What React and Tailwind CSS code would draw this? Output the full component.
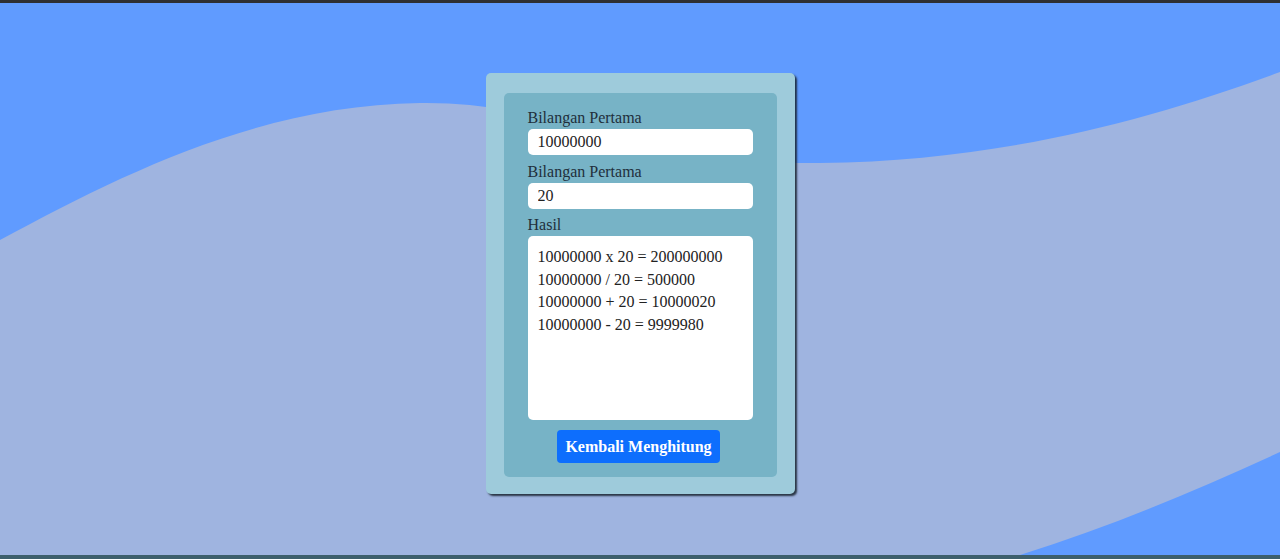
import React from "react";

const serif = { fontFamily: '"Liberation Serif", "Times New Roman", serif' };

function Wave() {
  return (
    <svg
      className="absolute inset-0 w-full h-full"
      viewBox="0 0 1280 552"
      preserveAspectRatio="none"
    >
      <rect width="1280" height="552" fill="#609bff" />
      <path
        d="M0,237 C120,172 260,102 420,100 C560,98 640,162 820,160 C1000,158 1150,117 1280,69 L1280,552 L0,552 Z"
        fill="#9fb4e0"
      />
      <path d="M1020,552 C1110,524 1200,486 1280,449 L1280,552 Z" fill="#609bff" />
    </svg>
  );
}

export default function App() {
  const results = [
    "10000000 x 20 = 200000000",
    "10000000 / 20 = 500000",
    "10000000 + 20 = 10000020",
    "10000000 - 20 = 9999980",
  ];

  return (
    <div className="w-[1280px] h-[559px] flex flex-col overflow-hidden" style={serif}>
      <div className="h-[3px] bg-[#2e2f33]" />
      <main className="relative flex-1 flex justify-center pt-[70px]">
        <Wave />
        <div className="relative w-[309px] h-[421px] bg-[#9ecbdb] rounded-[5px] pt-[20px] pb-[17px] px-[18px] shadow-[2px_2px_2px_rgba(20,30,40,0.85)]">
          <div className="h-full bg-[#77b3c6] rounded-[5px] px-[24px] pt-[13px] flex flex-col">
            <label className="text-[16px] leading-[23px] text-[#1f2f3b]">Bilangan Pertama</label>
            <input
              readOnly
              value="10000000"
              className="h-[26px] bg-white rounded-[5px] px-[10px] text-[16px] text-[#222] outline-none"
              style={serif}
            />
            <label className="mt-[5px] text-[16px] leading-[23px] text-[#1f2f3b]">Bilangan Pertama</label>
            <input
              readOnly
              value="20"
              className="h-[26px] bg-white rounded-[5px] px-[10px] text-[16px] text-[#222] outline-none"
              style={serif}
            />
            <label className="mt-[4px] text-[16px] leading-[23px] text-[#1f2f3b]">Hasil</label>
            <div className="h-[184px] bg-white rounded-[5px] px-[10px] pt-[10px] text-[16px] leading-[22.5px] text-[#222]">
              {results.map((r) => (
                <div key={r}>{r}</div>
              ))}
            </div>
            <div className="flex justify-center mt-[10px] pr-[3px]">
              <button
                className="w-[163px] h-[33px] bg-[#0d6efd] text-white font-bold text-[16px] rounded-[4px]"
                style={serif}
              >
                Kembali Menghitung
              </button>
            </div>
          </div>
        </div>
      </main>
      <div className="h-[4px] bg-[#3d5f6c]" />
    </div>
  );
}
